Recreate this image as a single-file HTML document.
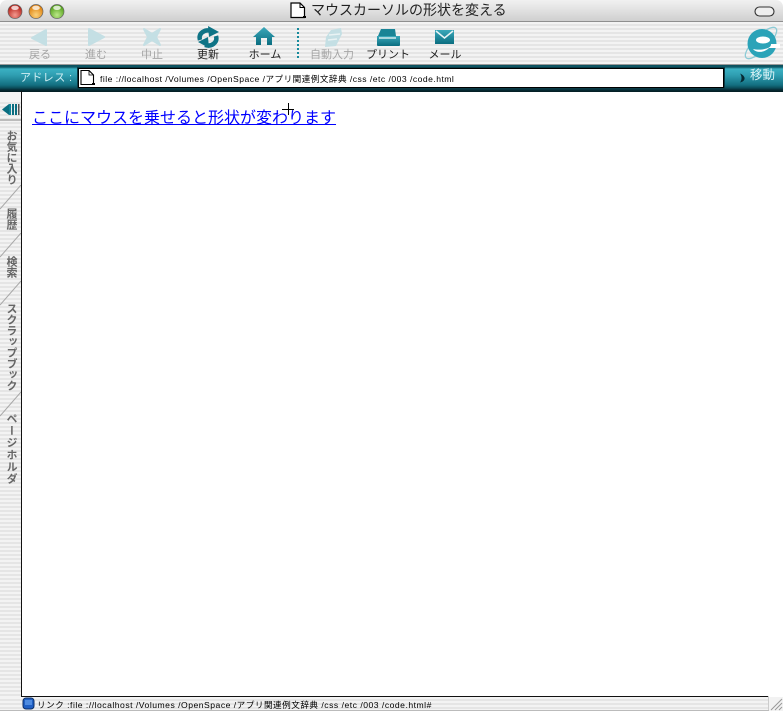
<!DOCTYPE html>
<html lang="ja"><head><meta charset="utf-8"><title>マウスカーソルの形状を変える</title>
<style>
html,body{margin:0;padding:0;background:#fff}
#w{position:relative;width:783px;height:711px;overflow:hidden;background:#fff;font-family:"Liberation Sans","Noto Sans CJK JP",sans-serif;color:#222}
#w div,#w span,#w svg,#w a{position:absolute;display:block}
.stripes{background:repeating-linear-gradient(180deg,#f3f3f3 0,#f3f3f3 2px,#e5e5e5 2px,#e5e5e5 4px)}
.lb{top:48px;font-size:11px;line-height:14px;white-space:nowrap;text-align:center;width:70px}
.dim{color:#a5a5a5}
.v{writing-mode:vertical-rl;font-size:11px;line-height:12px;left:5px;color:#666;font-weight:bold;white-space:nowrap}
.t{font-size:8.6px;line-height:12px;white-space:nowrap;color:#000}
</style></head><body><div id="w">
<!-- title bar -->
<div style="left:0;top:0;width:783px;height:21px;background:linear-gradient(180deg,#f1f1f1 0,#e4e4e4 40%,#cfcfcf 100%);border-radius:7px 7px 0 0"></div>
<div style="left:0;top:21px;width:783px;height:1px;background:#8f8f8f"></div>
<svg style="left:0;top:0" width="70" height="21">
<defs>
<radialGradient id="r" cx=".5" cy=".75" r=".7"><stop offset="0" stop-color="#f29a90"/><stop offset="1" stop-color="#b3170f"/></radialGradient>
<radialGradient id="o" cx=".5" cy=".75" r=".7"><stop offset="0" stop-color="#fbd27c"/><stop offset="1" stop-color="#dc7a05"/></radialGradient>
<radialGradient id="g" cx=".5" cy=".75" r=".7"><stop offset="0" stop-color="#bce88a"/><stop offset="1" stop-color="#4c9c12"/></radialGradient>
</defs>
<circle cx="15" cy="11.500" r="7" fill="url(#r)" stroke="#666" stroke-width=".7"/><ellipse cx="15" cy="7.800" rx="3.800" ry="2.200" fill="#fff" opacity=".75"/>
<circle cx="36" cy="11.500" r="7" fill="url(#o)" stroke="#666" stroke-width=".7"/><ellipse cx="36" cy="7.800" rx="3.800" ry="2.200" fill="#fff" opacity=".75"/>
<circle cx="57" cy="11.500" r="7" fill="url(#g)" stroke="#666" stroke-width=".7"/><ellipse cx="57" cy="7.800" rx="3.800" ry="2.200" fill="#fff" opacity=".75"/>
</svg>
<svg style="left:290px;top:2px" width="16" height="17"><path d="M1 1H10L14.500 5.500V15.500H1Z" fill="#fff" stroke="#000" stroke-width="1.200"/><path d="M10 1V5.500H14.500" fill="none" stroke="#000"/><rect x="13" y="14" width="3" height="2"/></svg>
<div style="left:311px;top:1px;height:19px;font-size:14px;line-height:19px;white-space:nowrap;color:#222">マウスカーソルの形状を変える</div>
<svg style="left:754px;top:5px" width="24" height="13"><rect x="1" y="2" width="19" height="9" rx="4.500" fill="#eee" stroke="#333" stroke-width="1.100"/></svg>
<!-- toolbar -->
<div class="stripes" style="left:0;top:22px;width:783px;height:42px"></div>
<div style="left:0;top:64px;width:783px;height:1px;background:#999"></div>
<svg style="left:0;top:22px" width="480" height="27">
<defs><linearGradient id="tl" x1="0" y1="0" x2="0" y2="1"><stop offset="0" stop-color="#3aa8ba"/><stop offset="1" stop-color="#0a6d80"/></linearGradient></defs>
<g fill="#c4dfe4" stroke="#c4dfe4" stroke-width="2" stroke-linejoin="round">
<path d="M32 16L46 8V23Z"/>
<path d="M89 7L104 15L89 23Z"/>
<path d="M144 7L152 12L160 7L156 15L160 23L152 18L144 23L148 15Z"/>
</g>
<path d="M331 8L341 6L342 12L336 24L325 25L326 15Z" fill="#c4dfe4"/>
<path d="M329 13L340 12M328 18L337 17" stroke="#e9f3f4" stroke-width="1.500" fill="none"/>
<g fill="none" stroke="#0f7486" stroke-width="4.500">
<path d="M200 18C198 11 205 7 211 9"/>
<path d="M216 14C218 21 211 25 205 23"/>
</g>
<path d="M208 4L219 10L209 15Z" fill="#0f7486"/>
<path d="M209 27L198 21L208 16Z" fill="#0f7486" transform="translate(0,-1)"/>
<g fill="url(#tl)">
<path d="M264 5L275 15H272V23H267V16H261V23H256V15H253Z"/>
<path d="M381 7H395L396 14H378Z" fill="#1a8496"/>
<path d="M377 14H400V23Q400 24 399 24H378Q377 24 377 23Z"/>
<path d="M435 8H454V22H435Z"/>
</g>
<path d="M379 16H396" stroke="#d5eaee" stroke-width="1.500"/>
<path d="M436 9L444.500 16L453 9" stroke="#e8f4f6" stroke-width="1.500" fill="none"/>
</svg>
<div style="left:297px;top:28px;width:2px;height:30px;background:repeating-linear-gradient(180deg,#178a9c 0,#178a9c 2px,transparent 2px,transparent 4px)"></div>
<div class="lb dim" style="left:5px">戻る</div>
<div class="lb dim" style="left:61px">進む</div>
<div class="lb dim" style="left:117px">中止</div>
<div class="lb" style="left:173px">更新</div>
<div class="lb" style="left:230px">ホーム</div>
<div class="lb dim" style="left:297px">自動入力</div>
<div class="lb" style="left:353px">プリント</div>
<div class="lb" style="left:410px">メール</div>
<svg style="left:744px;top:26px" width="36" height="36">
<ellipse cx="17" cy="17" rx="21" ry="7" transform="rotate(-45 17 17)" fill="none" stroke="#8ccbd6" stroke-width="1.300"/>
<circle cx="18" cy="17.500" r="14.500" fill="#2ba3b8"/>
<ellipse cx="19" cy="14" rx="7" ry="3.500" fill="#fff"/>
<path d="M9 23C12 27 20 27 25 22H36V18H27C27 20 26 21 24 22C19 24 13 24 9 23Z" fill="#fff"/>
</svg>
<!-- address bar -->
<div style="left:0;top:65px;width:783px;height:27px;background:linear-gradient(180deg,#0d4f5c 0,#0d5866 2px,#3ab0c2 4px,#2f9fb2 10px,#136f81 20px,#0b4c59 23px,#062a33 25px,#041c22 27px)"></div>
<div style="left:20px;top:71px;font-size:11px;line-height:14px;color:#cfeef3;white-space:nowrap;letter-spacing:.4px">アドレス :</div>
<div style="left:78px;top:68px;width:644px;height:18px;background:#fff;border:1px solid #000;box-shadow:0 0 0 1px #0a3a45"></div>
<svg style="left:80px;top:70px" width="16" height="16"><path d="M1 .5H9L13.500 5V14.500H1Z" fill="#fff" stroke="#000" stroke-width="1.100"/><path d="M9 .5V5H13.500" fill="none" stroke="#000" stroke-width=".8"/><rect x="12" y="13" width="3" height="2"/></svg>
<div class="t" style="left:100px;top:73px;letter-spacing:.47px">file ://localhost /Volumes /OpenSpace /アプリ関連例文辞典 /css /etc /003 /code.html</div>
<svg style="left:738px;top:73px" width="9" height="10"><path d="M2 .5C6 2 7 5 6.500 6C6 8 4 9 2 9.500C4 7 4 3 2 .5Z" fill="#062a33"/></svg>
<div style="left:750px;top:68px;font-size:12.500px;line-height:15px;color:#d8f1f5;white-space:nowrap">移動</div>
<!-- sidebar -->
<div class="stripes" style="left:0;top:92px;width:21px;height:605px"></div>
<div style="left:21px;top:91px;width:1px;height:606px;background:#111"></div>
<div style="left:0;top:92px;width:21px;height:8px;background:#f4f4f4"></div>
<div style="left:0;top:119px;width:21px;height:2px;background:#bbb"></div>
<svg style="left:1px;top:101px" width="19" height="17"><path d="M1 8.500L8 3V14Z" fill="#0a6d80"/><rect x="8" y="3" width="2" height="11" fill="#108296"/><rect x="11" y="3" width="2" height="11" fill="#0a6d80"/><rect x="14" y="3" width="2" height="11" fill="#0a6d80"/><rect x="17" y="3" width="1.500" height="11" fill="#555"/></svg>
<svg style="left:0;top:180px" width="21" height="320" fill="none" stroke="#a8a8a8">
<path d="M0 29L21 5"/><path d="M0 77L21 53"/><path d="M0 125L21 101" /><path d="M0 236L21 212"/>
</svg>
<div class="v" style="top:130px">お気に入り</div>
<div class="v" style="top:208px">履歴</div>
<div class="v" style="top:256px">検索</div>
<div class="v" style="top:303px">スクラップブック</div>
<div class="v" style="top:413px;letter-spacing:1px">ページホルダ</div>
<!-- content -->
<a href="#" style="left:32px;top:108px;font-size:16px;line-height:22px;color:#00f;text-decoration:underline;white-space:nowrap">ここにマウスを乗せると形状が変わります</a>
<svg style="left:282px;top:103px" width="13" height="13"><path d="M6.500 0V12M0 6.500H12" stroke="#000" fill="none"/></svg>
<!-- status bar -->
<div class="stripes" style="left:0;top:697px;width:783px;height:14px"></div>
<div style="left:22px;top:696px;width:746px;height:1px;background:#111"></div>
<div style="left:768px;top:696px;width:1px;height:15px;background:#ccc"></div>
<div style="left:0;top:710px;width:783px;height:1px;background:#bbb"></div>
<div style="left:769px;top:697px;width:14px;height:14px;background:#f2f2f2"></div>
<svg style="left:769px;top:697px" width="14" height="14" stroke="#999" fill="none"><path d="M2 13L13 2M6 13L13 6M10 13L13 10"/></svg>
<svg style="left:22px;top:697px" width="14" height="13"><rect x="1" y="1" width="11" height="11" rx="3" fill="#1f5fc4" stroke="#0d2f66"/><rect x="3" y="3" width="7" height="5" fill="#4e8be0"/></svg>
<div class="t" style="left:37px;top:699px;letter-spacing:.5px">リンク :file ://localhost /Volumes /OpenSpace /アプリ関連例文辞典 /css /etc /003 /code.html#</div>
</div></body></html>
